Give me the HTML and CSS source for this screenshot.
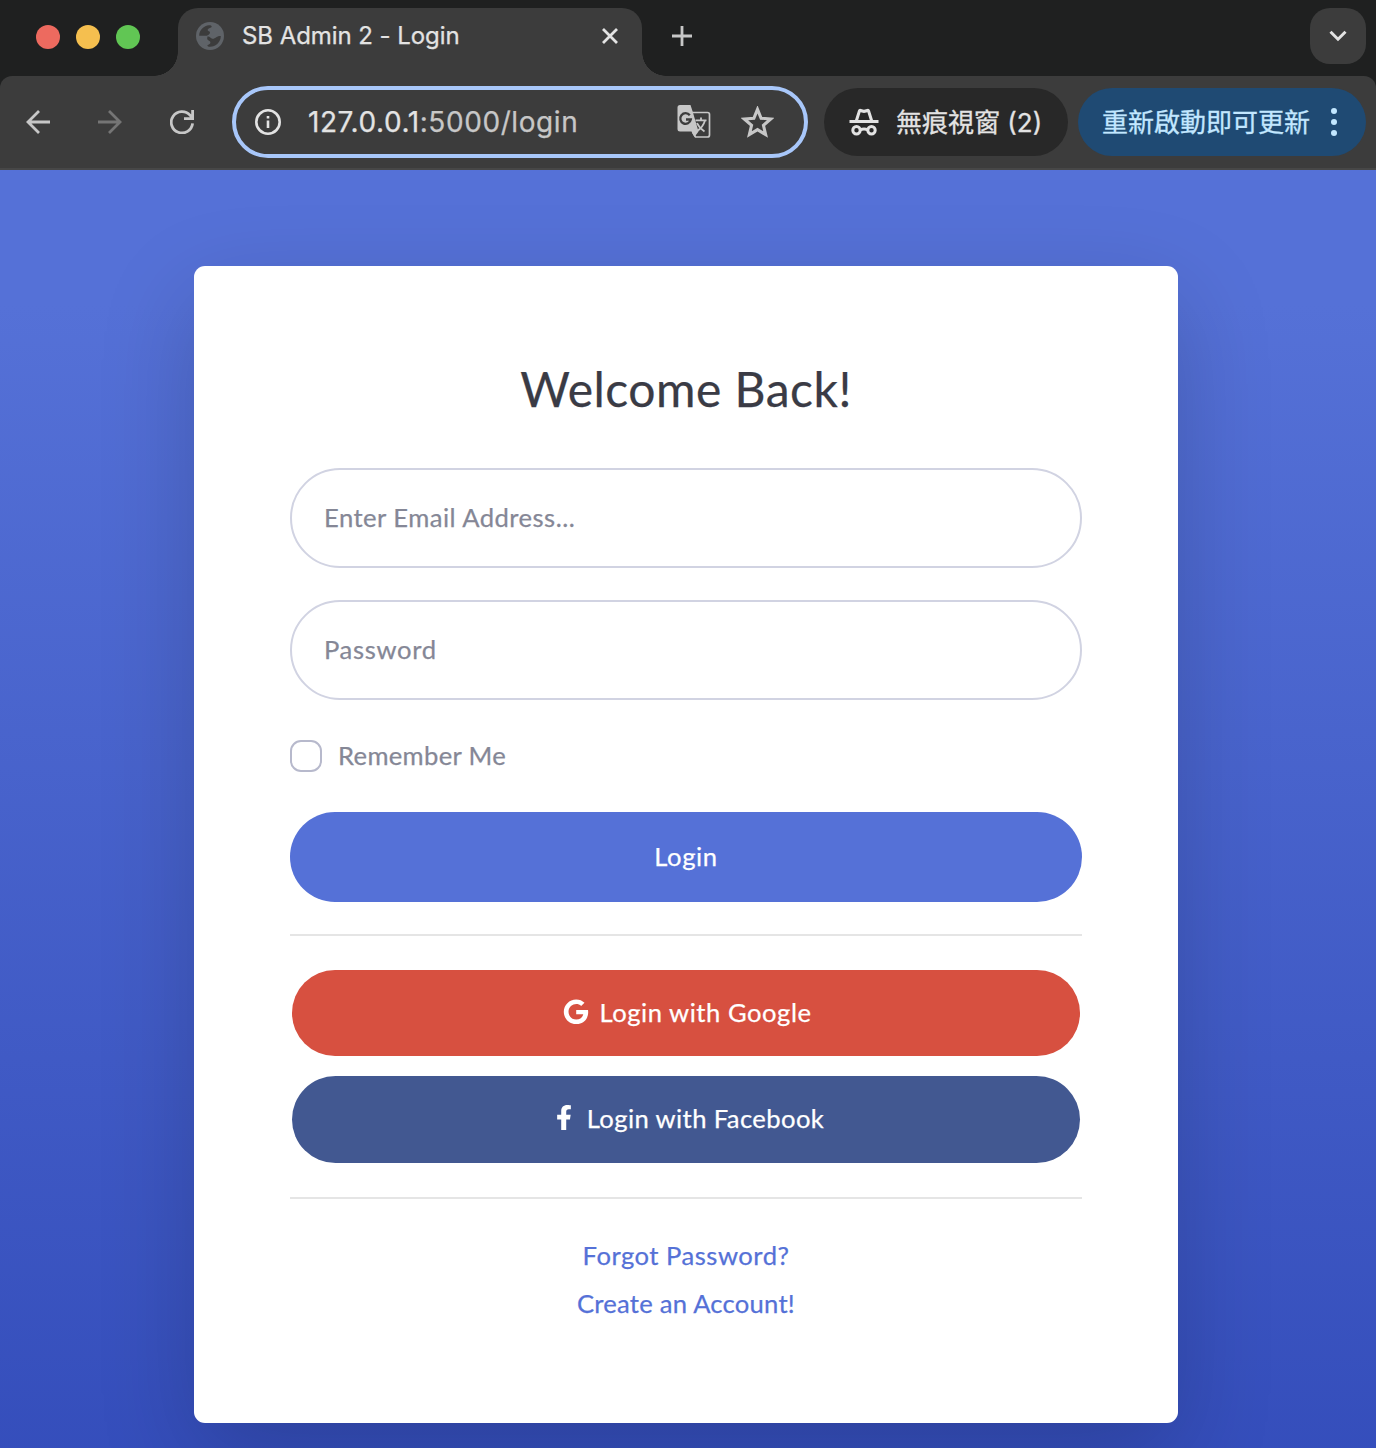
FILE: index.html
```html
<!DOCTYPE html>
<html lang="zh-Hant">
<head>
<meta charset="utf-8">
<title>SB Admin 2 - Login</title>
<link rel="stylesheet" href="styles.css">
</head>
<body>
<header class="browser">
  <div class="tabstrip">
    <div class="lights"><i class="light red"></i><i class="light yellow"></i><i class="light green"></i></div>
    <div class="tab">
      <svg class="globe" viewBox="0 0 28 28"><circle cx="14" cy="14" r="14" fill="#5f6368"/><path d="M3.200 13.700C3.200 8 8 3.600 13 3.300c1.500 0 2.700.3 2.700 1.200 0 1.500-4 1.500-4 3.500 0 1.400 2.300.8 2.300 2.600 0 1.800-2.600 3.100-3 3.100H3.200zM11.400 14.500c3 0 3.500 2.300 5.500 2.300 2.600 0 2.700-2.800 7.900-2.800 0 6-5 10.800-10.800 10.800-1.400 0-2.600-.3-2.600-1.300s3-1 3-3-3.200-1.800-3.200-3.700z" fill="#3c3c3c"/></svg>
      <span class="tab-title">SB Admin 2 - Login</span>
      <svg class="close" viewBox="0 0 16 16"><path d="M1 1l14 14M15 1L1 15" fill="none" stroke="#e3e3e3" stroke-width="2.800"/></svg>
    </div>
    <svg class="plus" viewBox="0 0 20 20"><path d="M10 0v20M0 10h20" fill="none" stroke="#c7c7c7" stroke-width="2.800"/></svg>
    <div class="tab-search"><svg width="18" height="12" viewBox="0 0 18 12"><path d="M1.500 1.800L9 9.200l7.500-7.400" fill="none" stroke="#e3e3e3" stroke-width="3"/></svg></div>
  </div>
  <div class="toolbar">
    <svg class="nav back" viewBox="0 0 24 24"><path d="M24 12H2M13 1L2 12l11 11" fill="none" stroke="#c7c7c7" stroke-width="2.800"/></svg>
    <svg class="nav forward" viewBox="0 0 24 24"><path d="M0 12h22M11 1l11 11-11 11" fill="none" stroke="#757575" stroke-width="2.800"/></svg>
    <svg class="nav reload" viewBox="0 0 24 24"><path d="M22.600 13.400A10.700 10.700 0 1 1 20 5.200L22.500 8M22.600 0v8.700H14" fill="none" stroke="#c7c7c7" stroke-width="2.800"/></svg>
    <div class="omnibox">
      <svg class="info" viewBox="0 0 26 26"><circle cx="13" cy="13" r="11.700" fill="none" stroke="#e3e3e3" stroke-width="2.600"/><path d="M13 11.500V19M13 7v2.600" stroke="#e3e3e3" stroke-width="2.600"/></svg>
      <span class="url">127.0.0.1<span class="path">:5000/login</span></span>
      <svg class="translate" viewBox="0 0 34 34"><path d="M15 7.500h15.500a2 2 0 0 1 2 2v20.500a2 2 0 0 1-2 2H18.500l-3-5" fill="none" stroke="#c7c7c7" stroke-width="1.700"/><path d="M3 0h10.500l2.300 7 5.700 19.500-4 5.500-3-5.500H3a2.500 2.500 0 0 1-2.500-2.500V2.500A2.500 2.500 0 0 1 3 0z" fill="#c7c7c7"/><path d="M12.800 10.300A5.300 5.300 0 1 0 13.800 14.500H9" fill="none" stroke="#3c3c3c" stroke-width="2.300"/><path d="M18.500 15.300h11M24 12.500v3M28 15.500c-1.500 5-4.500 8.500-8 10.500M20 18c2 4.500 4.500 6.500 7.500 8.500" fill="none" stroke="#c7c7c7" stroke-width="1.800"/></svg>
      <svg class="star" viewBox="0 0 30 30"><path d="M15 3l3.300 8.100 8.700.7-6.600 5.700 2 8.500-7.400-4.500L7.600 26l2-8.500L3 11.800l8.700-.7z" fill="none" stroke="#c7c7c7" stroke-width="2.800"/></svg>
    </div>
    <div class="chip incognito">
      <svg class="spy" viewBox="0 0 30 28"><path d="M6 12L9 2.600Q9.700.3 12 1l3 .7 3-.7q2.300-.7 3 1.600L24 12h5.500v2.900h-29V12zM9.200 12h11.600l-2.400-7.800-3.400.8-3.400-.8z" fill="#e3e3e3" fill-rule="evenodd"/><g fill="none" stroke="#e3e3e3" stroke-width="3"><circle cx="7.500" cy="22.300" r="3.700"/><circle cx="22.500" cy="22.300" r="3.700"/><path d="M11 22q4-2 8 0"/></g></svg>
      <span class="chip-label">無痕視窗 (2)</span>
    </div>
    <div class="chip update">
      <span class="chip-label">重新啟動即可更新</span>
      <svg class="dots" viewBox="0 0 6 28" fill="#c2e7ff"><circle cx="3" cy="3" r="3"/><circle cx="3" cy="14" r="3"/><circle cx="3" cy="25" r="3"/></svg>
    </div>
  </div>
</header>
<main class="page">
  <section class="card">
    <h1 class="title">Welcome Back!</h1>
    <form class="form">
      <input class="field email" type="text" placeholder="Enter Email Address...">
      <input class="field password" type="text" placeholder="Password">
      <label class="remember"><input class="check" type="checkbox"><span>Remember Me</span></label>
      <a class="btn login"><span>Login</span></a>
      <hr class="rule">
      <a class="btn google"><svg class="brand" viewBox="-76 0 640 512"><path fill="#fff" d="M488 261.800C488 403.300 391.100 504 248 504 110.800 504 0 393.200 0 256S110.800 8 248 8c66.800 0 123 24.500 166.300 64.900l-67.500 64.900C258.500 52.600 94.300 116.600 94.300 256c0 86.500 69.100 156.600 153.700 156.600 98.200 0 135-70.400 140.800-106.900H248v-85.300h236.100c2.300 12.700 3.900 24.900 3.900 41.400z"/></svg><span>Login with Google</span></a>
      <a class="btn facebook"><svg class="brand" viewBox="-160 0 640 512"><path fill="#fff" d="M279.140 288l14.220-92.660h-88.910v-60.130c0-25.350 12.420-50.060 52.240-50.060h40.420V6.260S260.430 0 225.360 0c-73.220 0-121.080 44.380-121.080 124.720v70.620H22.890V288h81.390v224h100.170V288z"/></svg><span>Login with Facebook</span></a>
      <hr class="rule second">
    </form>
    <nav class="links"><a class="forgot">Forgot Password?</a><a class="create">Create an Account!</a></nav>
  </section>
</main>
</body>
</html>
```
FILE: styles.css
```css
* { box-sizing: border-box; }
body { margin: 0; height: 1448px; overflow: hidden; display: flex; flex-direction: column; font-family: Lato, sans-serif; font-size: 25.6px; background: #3c3c3c; }
svg { display: block; flex: none; }

.browser { flex: none; background: #1f2020; font-family: Inter, "Noto Sans CJK TC", sans-serif; }
.tabstrip { height: 76px; display: flex; align-items: flex-start; padding: 8px 10px 0 36px; }
.lights { display: flex; gap: 16px; margin-top: 17px; width: 142px; }
.light { width: 24px; height: 24px; border-radius: 50%; }
.red { background: #ed6a5f; }
.yellow { background: #f5bf4f; }
.green { background: #61c654; }
.tab { position: relative; width: 464px; height: 68px; background: #3c3c3c; border-radius: 20px 20px 0 0; display: flex; align-items: center; padding: 0 24px 12px 18px; }
.tab::before, .tab::after { content: ""; position: absolute; bottom: 0; width: 24px; height: 24px; }
.tab::before { left: -24px; background: radial-gradient(circle at 0 0, transparent 23.5px, #3c3c3c 24px); }
.tab::after { right: -24px; background: radial-gradient(circle at 100% 0, transparent 23.5px, #3c3c3c 24px); }
.globe { width: 28px; height: 28px; }
.tab-title { margin: 0 0 2px 18px; font-size: 24px; letter-spacing: -.06px; color: #e3e3e3; white-space: nowrap; -webkit-text-stroke: .25px; }
.close { width: 16px; height: 16px; margin-left: auto; }
.plus { width: 20px; height: 20px; margin: 18px 0 0 30px; }
.tab-search { width: 56px; height: 56px; margin-left: auto; border-radius: 20px; background: #3c3c3c; display: flex; align-items: center; justify-content: center; }

.toolbar { height: 94px; background: #3c3c3c; border-bottom: 2px solid #474747; border-radius: 12px 12px 0 0; display: flex; align-items: center; padding: 0 10px 0 26px; }
.nav { width: 24px; height: 24px; }
.forward, .reload { margin-left: 48px; }
.omnibox { width: 576px; height: 72px; margin-left: 38px; border: 4px solid #a8c7fa; border-radius: 36px; display: flex; align-items: center; padding: 0 30px 0 19px; }
.info { width: 26px; height: 26px; }
.url { margin-left: 27px; font-size: 28px; letter-spacing: .58px; color: #e3e3e3; white-space: nowrap; -webkit-text-stroke: .25px; }
.path { color: #c7c7c7; }
.translate { width: 34px; height: 34px; margin-left: auto; }
.star { width: 33px; height: 33px; margin-left: 30px; }
.chip { height: 68px; border-radius: 34px; display: flex; align-items: center; font-size: 26px; white-space: nowrap; }
.chip-label { padding-bottom: 3px; -webkit-text-stroke: .3px; }
.incognito { width: 244px; margin-left: 16px; padding-left: 25px; background: #282828; color: #e3e3e3; }
.spy { width: 30px; height: 28px; }
.incognito .chip-label { margin-left: 17px; }
.update { width: 288px; margin-left: 10px; padding: 0 29px 0 24px; background: #1f4a73; color: #c2e7ff; justify-content: space-between; }
.dots { width: 6px; height: 28px; }

.page { height: 1278px; padding-top: 96px; background: linear-gradient(180deg, #5571d7 10%, #334cba 100%) 0 0 / 100% 1349px no-repeat; overflow: hidden; }
.card { width: 984px; height: 1157px; margin-left: 194px; padding: 94px 96px; border-radius: 11px; background: #fff; box-shadow: 0 32px 96px rgba(0, 0, 0, .175); -webkit-text-stroke: .25px; }
.title { margin: 0 0 50px; font-size: 48px; font-weight: 400; line-height: 58px; letter-spacing: .5px; text-align: center; color: #3a3b45; white-space: nowrap; }
.form { display: flex; flex-direction: column; }
.field { width: 100%; height: 100px; margin: 0 0 32px; padding: 0 32px 3px; border: 2px solid #d1d3e2; border-radius: 50px; font: inherit; background: #fff; -webkit-text-stroke: .25px; }
.field::placeholder { color: #858796; opacity: 1; }
.email { letter-spacing: .47px; }
.password { letter-spacing: .65px; }
.remember { display: flex; align-items: center; gap: 16px; height: 32px; margin-top: 8px; color: #858796; letter-spacing: .33px; }
.remember span { padding-bottom: 3px; }
.check { appearance: none; width: 32px; height: 32px; margin: 0; border: 2px solid #b7b9cc; border-radius: 11px; }
.btn { display: flex; align-items: center; justify-content: center; padding-bottom: 3px; color: #fff; white-space: nowrap; }
.login { height: 90px; margin-top: 40px; border-radius: 45px; background: #5571d7; letter-spacing: .6px; }
.rule { width: 100%; height: 2px; margin: 32px 0 34px; border: 0; background: #e5e5e5; }
.google, .facebook { margin: 0 2px; border-radius: 44px; }
.google { height: 86px; background: #d75040; letter-spacing: .53px; }
.facebook { height: 87px; margin-top: 20px; padding-bottom: 4px; background: #425891; letter-spacing: .4px; }
.second { margin: 34px 0 0; }
.brand { width: 32px; height: 25.6px; margin-right: 7px; }
.links { display: flex; flex-direction: column; align-items: center; margin-top: 32px; line-height: 48px; color: #5571d7; }
.forgot { letter-spacing: .5px; }
.create { letter-spacing: .24px; }
```
